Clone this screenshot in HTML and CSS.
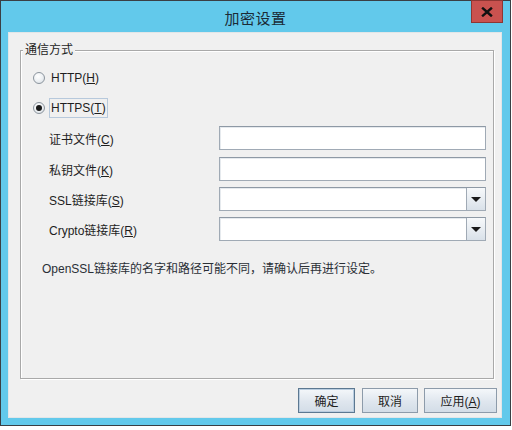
FILE: index.html
```html
<!DOCTYPE html>
<html lang="zh">
<head>
<meta charset="utf-8">
<title>加密设置</title>
<link rel="stylesheet" href="styles.css">
</head>
<body>
<div class="window">
  <div class="titlebar">
    <div class="title">加密设置</div>
    <div class="close">
      <svg width="12" height="10" viewBox="0 0 12 10"><path d="M2 1.5 L10 8.5 M10 1.5 L2 8.5" stroke="#111" stroke-width="2.4" stroke-linecap="square"/></svg>
    </div>
  </div>
  <div class="client">
    <div class="group">
      <span class="legend">通信方式</span>
      <div class="radio-row first">
        <span class="radio"></span>
        <span class="radio-label">HTTP(<u>H</u>)</span>
      </div>
      <div class="radio-row second">
        <span class="radio checked"><span class="dot"></span></span>
        <span class="radio-label focus">HTTPS(<u>T</u>)</span>
      </div>
      <div class="form">
        <div class="row r1">
          <span class="label">证书文件(<u>C</u>)</span>
          <span class="field"></span>
        </div>
        <div class="row">
          <span class="label">私钥文件(<u>K</u>)</span>
          <span class="field"></span>
        </div>
        <div class="row">
          <span class="label">SSL链接库(<u>S</u>)</span>
          <span class="field combo"><span class="combo-text"></span><span class="arrow"><span class="tri"></span></span></span>
        </div>
        <div class="row">
          <span class="label">Crypto链接库(<u>R</u>)</span>
          <span class="field combo"><span class="combo-text"></span><span class="arrow"><span class="tri"></span></span></span>
        </div>
      </div>
      <div class="note">OpenSSL链接库的名字和路径可能不同，请确认后再进行设定。</div>
    </div>
    <div class="buttons">
      <button class="btn default">确定</button>
      <button class="btn cancel">取消</button>
      <button class="btn wide">应用(<u>A</u>)</button>
    </div>
  </div>
</div>
</body>
</html>
```

FILE: styles.css
```css
html, body {
  margin: 0;
  padding: 0;
  background: #ffffff;
}
body {
  font-family: "Liberation Sans", "Noto Sans CJK SC", sans-serif;
  font-size: 12px;
  color: #1e1e1e;
}
u {
  text-decoration: underline;
  text-underline-offset: 1px;
}
.window {
  box-sizing: border-box;
  width: 511px;
  height: 426px;
  border: 1px solid #3a3f44;
  background: #62c9eb;
  display: flex;
  flex-direction: column;
}
.titlebar {
  height: 31px;
  display: grid;
  grid-template-columns: 1fr auto 1fr;
  align-items: start;
}
.title {
  grid-column: 2;
  font-size: 15px;
  line-height: 18px;
  margin-top: 9px;
  color: #1b2b36;
  letter-spacing: 0.5px;
}
.close {
  grid-column: 3;
  justify-self: end;
  margin-right: 7px;
  margin-top: -1px;
  box-sizing: border-box;
  width: 32px;
  height: 23px;
  background: #c9524f;
  border: 1px solid #8e3633;
  display: flex;
  align-items: center;
  justify-content: center;
}
.client {
  box-sizing: border-box;
  height: 386px;
  margin: 0 8px 0 7px;
  background: #f0f0f0;
  border: 1px solid #e2e6e8;
  padding: 17px 4px 4px 11px;
  display: flex;
  flex-direction: column;
}
.group {
  position: relative;
  box-sizing: border-box;
  height: 329px;
  margin-right: 3px;
  border: 1px solid #a9a9a9;
  box-shadow: 1px 1px 0 #ffffff, inset 1px 1px 0 #ffffff;
  padding: 17px 0 0 12px;
  display: flex;
  flex-direction: column;
}
.legend {
  position: absolute;
  left: 2px;
  top: -8px;
  padding: 0 2px;
  line-height: 15px;
  background: #f0f0f0;
}
.radio-row {
  display: flex;
  align-items: center;
  height: 20px;
}
.radio-row.second {
  margin-top: 10px;
}
.radio {
  box-sizing: border-box;
  width: 12px;
  height: 12px;
  border-radius: 50%;
  border: 1px solid #8c959e;
  background: radial-gradient(circle at 40% 35%, #ffffff 0%, #eef1f4 50%, #d3d9df 100%);
  display: flex;
  align-items: center;
  justify-content: center;
  margin-right: 4px;
}
.radio .dot {
  width: 6px;
  height: 6px;
  border-radius: 50%;
  background: #1a1a1a;
}
.radio-label {
  box-sizing: border-box;
  height: 20px;
  line-height: 18px;
  padding: 0 1px 0 1px;
  border: 1px solid transparent;
}
.radio-label.focus {
  border-color: #b7c9dc;
}
.form {
  margin-top: 8px;
  padding-left: 16px;
  display: flex;
  flex-direction: column;
  gap: 6px;
}
.row {
  display: flex;
  align-items: center;
  height: 24px;
}
.row.r1 {
  margin-bottom: 1px;
}
.label {
  width: 170px;
  flex: none;
}
.field {
  box-sizing: border-box;
  width: 267px;
  height: 24px;
  background: #ffffff;
  border: 1px solid #a0aab5;
  border-top-color: #8e99a5;
  box-shadow: inset 1px 1px 0 #e6eaee;
  display: flex;
}
.combo-text {
  flex: 1;
}
.arrow {
  box-sizing: border-box;
  width: 19px;
  height: 100%;
  border-left: 1px solid #a0aab5;
  background: linear-gradient(#f7f9fb, #d9e1e9);
  display: flex;
  align-items: center;
  justify-content: center;
}
.tri {
  width: 0;
  height: 0;
  border-left: 5px solid transparent;
  border-right: 5px solid transparent;
  border-top: 5px solid #1a1a1a;
}
.note {
  margin-top: 20px;
  padding-left: 9px;
  line-height: 16px;
  color: #2a2f36;
}
.buttons {
  margin-top: 9px;
  display: flex;
  justify-content: flex-end;
  gap: 6px;
}
.btn {
  box-sizing: border-box;
  height: 25px;
  width: 57px;
  font-family: "Liberation Sans", "Noto Sans CJK SC", sans-serif;
  font-size: 12px;
  color: #1e1e1e;
  border: 1px solid #8d9baa;
  background: linear-gradient(#f4f7fa, #dfe6ee 55%, #d3dde7);
  padding: 0;
}
.btn.default {
  width: 57px;
  margin-right: 1px;
  border: 1px solid #5c7891;
  box-shadow: inset 0 0 0 1px #b9cde0;
}
.btn.cancel {
  width: 56px;
}
.btn.wide {
  width: 73px;
}
```
